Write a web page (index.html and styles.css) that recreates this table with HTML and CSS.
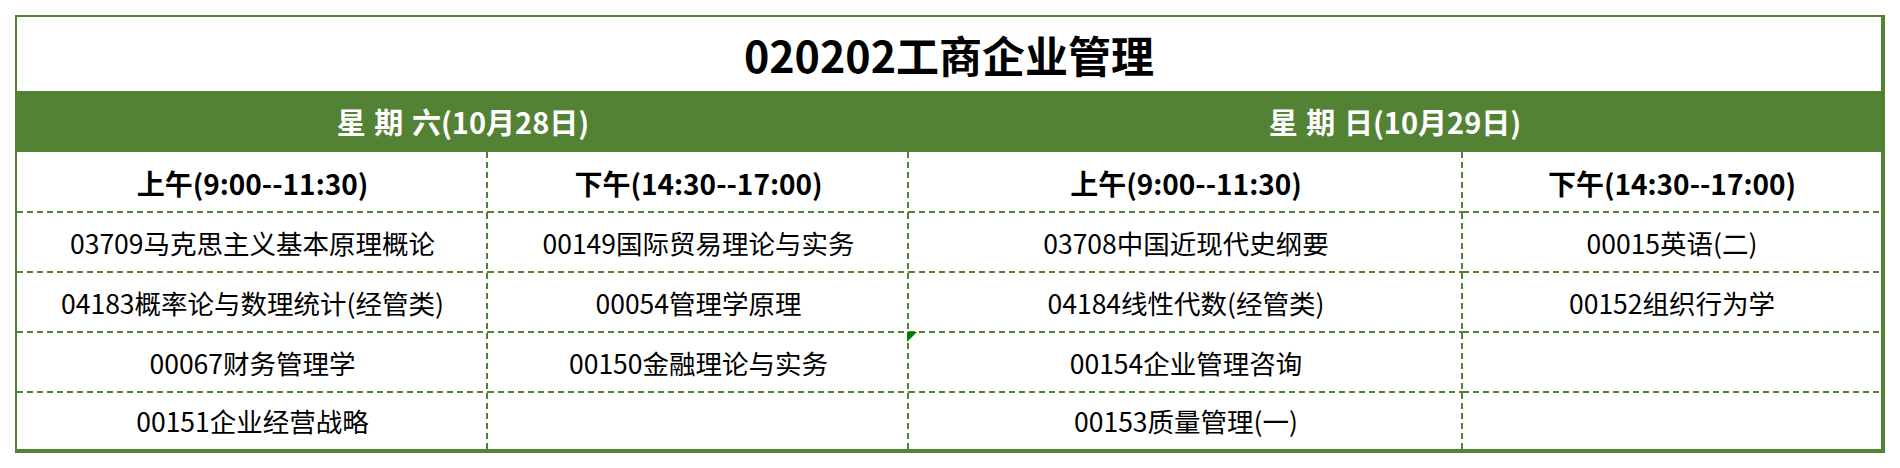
FILE: index.html
```html
<!DOCTYPE html>
<html lang="zh-CN">
<head>
<meta charset="utf-8">
<title>020202工商企业管理</title>
<link rel="stylesheet" href="styles.css">
</head>
<body>
<div class="sheet">
  <div class="title">020202工商企业管理</div>
  <div class="grid">
    <div class="day span2">星 期 六(10月28日)</div>
    <div class="day span2">星 期 日(10月29日)</div>

    <div class="cell head rb bb">上午(9:00--11:30)</div>
    <div class="cell head rb bb">下午(14:30--17:00)</div>
    <div class="cell head rb bb">上午(9:00--11:30)</div>
    <div class="cell head bb">下午(14:30--17:00)</div>

    <div class="cell rb bb">03709马克思主义基本原理概论</div>
    <div class="cell rb bb">00149国际贸易理论与实务</div>
    <div class="cell rb bb">03708中国近现代史纲要</div>
    <div class="cell bb">00015英语(二)</div>

    <div class="cell rb bb">04183概率论与数理统计(经管类)</div>
    <div class="cell rb bb">00054管理学原理</div>
    <div class="cell rb bb">04184线性代数(经管类)</div>
    <div class="cell bb">00152组织行为学</div>

    <div class="cell rb bb">00067财务管理学</div>
    <div class="cell rb bb">00150金融理论与实务</div>
    <div class="cell rb bb flag">00154企业管理咨询</div>
    <div class="cell bb"></div>

    <div class="cell rb last">00151企业经营战略</div>
    <div class="cell rb last"></div>
    <div class="cell rb last">00153质量管理(一)</div>
    <div class="cell last"></div>
  </div>
</div>
</body>
</html>
```

FILE: styles.css
```css
html, body {
  margin: 0;
  padding: 0;
  background: #ffffff;
}

body {
  font-family: "Noto Sans CJK SC", "Noto Sans", sans-serif;
  color: #000000;
}

.sheet {
  margin: 15px 0 0 15px;
  width: 1870px;
  box-sizing: border-box;
  border-style: solid;
  border-color: #548235;
  border-width: 2px 4px 4px 2px;
}

.title {
  height: 74px;
  display: flex;
  align-items: center;
  justify-content: center;
  font-size: 43px;
  font-weight: 700;
  line-height: 1;
}

.grid {
  display: grid;
  grid-template-columns: 471px 421px 554px 418px;
  grid-template-rows: 61px 61px 60px 60px 60px 56px;
}

.day {
  background: #548235;
  color: #ffffff;
  font-size: 29px;
  font-weight: 700;
  display: flex;
  align-items: center;
  justify-content: center;
  line-height: 1;
  word-spacing: 2px;
}

.span2 {
  grid-column: span 2;
}

.cell {
  position: relative;
  display: flex;
  align-items: center;
  justify-content: center;
  font-size: 26.5px;
  line-height: 1;
  white-space: nowrap;
  background-repeat: no-repeat;
}

.head {
  font-weight: 700;
  font-size: 28px;
}

.rb.bb {
  background-image:
    repeating-linear-gradient(to right, #548235 0 6px, transparent 6px 10px),
    repeating-linear-gradient(to bottom, #548235 0 6px, transparent 6px 10px);
  background-size: 100% 2px, 2px 100%;
  background-position: left bottom, right top;
}

.bb:not(.rb) {
  background-image:
    repeating-linear-gradient(to right, #548235 0 6px, transparent 6px 10px);
  background-size: 100% 2px;
  background-position: left bottom;
}

.rb.last {
  background-image:
    repeating-linear-gradient(to bottom, #548235 0 6px, transparent 6px 10px);
  background-size: 2px 100%;
  background-position: right top;
}

.flag::before {
  content: "";
  position: absolute;
  left: -2px;
  top: -1px;
  width: 0;
  height: 0;
  border-top: 10px solid #008000;
  border-right: 10px solid transparent;
}
```
